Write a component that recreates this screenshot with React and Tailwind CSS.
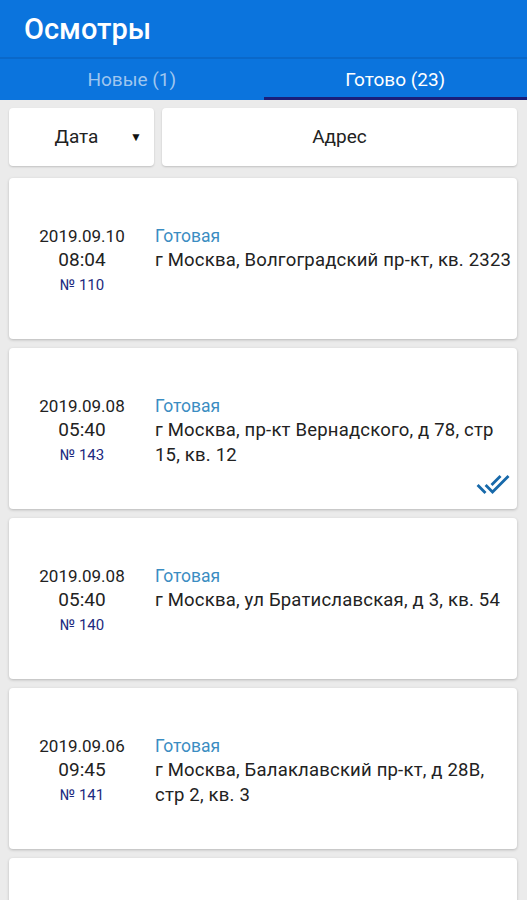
import React from 'react';

const ITEMS = [
  { date: '2019.09.10', time: '08:04', num: '110', address: 'г Москва, Волгоградский пр-кт, кв. 2323' },
  { date: '2019.09.08', time: '05:40', num: '143', address: 'г Москва, пр-кт Вернадского, д 78, стр 15, кв. 12', synced: true },
  { date: '2019.09.08', time: '05:40', num: '140', address: 'г Москва, ул Братиславская, д 3, кв. 54' },
  { date: '2019.09.06', time: '09:45', num: '141', address: 'г Москва, Балаклавский пр-кт, д 28В, стр 2, кв. 3' },
];

function DoneAll() {
  return (
    <svg viewBox="0 0 24 24" className="w-[34px] h-[34px]" fill="#1769aa" aria-hidden="true">
      <path d="M18 7l-1.41-1.41-6.34 6.34 1.41 1.41L18 7zm4.24-1.41L11.66 16.17 7.48 12l-1.41 1.41L11.66 19l12-12-1.42-1.41zM.41 13.41L6 19l1.41-1.41L1.83 12 .41 13.41z" />
    </svg>
  );
}

function Card({ item }) {
  return (
    <div className="relative h-[161px] shrink-0 rounded-[4px] bg-white shadow-[0_1px_3px_rgba(0,0,0,0.22)] flex items-center pt-[4px]">
      <div className="flex items-start w-full">
        <div className="w-[146px] flex flex-col items-center leading-[24.5px] text-[#222]">
          <span className="text-[17px]">{item.date}</span>
          <span className="text-[19px]">{item.time}</span>
          <span className="text-[15px] text-[#1c2a80]">№ {item.num}</span>
        </div>
        <div className="flex-1 pr-[4px] flex flex-col leading-[24.5px]">
          <span className="text-[17.5px] text-[#3b8dc2]">Готовая</span>
          <span className="text-[18.5px] tracking-[0.2px] text-[#222]">{item.address}</span>
        </div>
      </div>
      {item.synced && (
        <div className="absolute right-[7px] bottom-[8px]">
          <DoneAll />
        </div>
      )}
    </div>
  );
}

export default function App() {
  return (
    <div className="h-[900px] overflow-hidden bg-[#ebebeb] font-['Roboto','Noto_Sans',sans-serif]">
      <header className="bg-[#0b74dd]">
        <div className="h-[57px] flex items-center pl-[24px]">
          <h1 className="text-[29px] font-medium text-white pt-[2px]">Осмотры</h1>
        </div>
        <div className="h-[2px] bg-[#0a68c9]" />
        <div className="flex h-[41px]">
          <div className="flex-1 flex items-center justify-center text-[19px] text-[#9fc6ef] pt-[1px]">Новые (1)</div>
          <div className="flex-1 flex flex-col">
            <div className="flex-1 flex items-center justify-center text-[19px] text-white pt-[4px]">Готово (23)</div>
            <div className="h-[3px] bg-[#1a1f7a]" />
          </div>
        </div>
      </header>

      <div className="pl-[9px] pr-[10px] pt-[8px] flex flex-col">
        <div className="flex gap-[8px] h-[58px]">
          <div className="w-[145px] rounded-[4px] bg-white shadow-[0_1px_2px_rgba(0,0,0,0.18)] flex items-center text-[19px] text-[#222]">
            <span className="flex-1 text-center pl-[14px]">Дата</span>
            <span className="w-[24px] text-[12px] text-[#111]">▼</span>
          </div>
          <div className="flex-1 rounded-[4px] bg-white shadow-[0_1px_2px_rgba(0,0,0,0.18)] flex items-center justify-center text-[19px] text-[#222]">
            Адрес
          </div>
        </div>

        <div className="mt-[12px] flex flex-col gap-[9px]">
          {ITEMS.map((item, i) => (
            <Card key={i} item={item} />
          ))}
          <div className="h-[161px] shrink-0 rounded-[4px] bg-white shadow-[0_1px_3px_rgba(0,0,0,0.22)]" />
        </div>
      </div>
    </div>
  );
}
